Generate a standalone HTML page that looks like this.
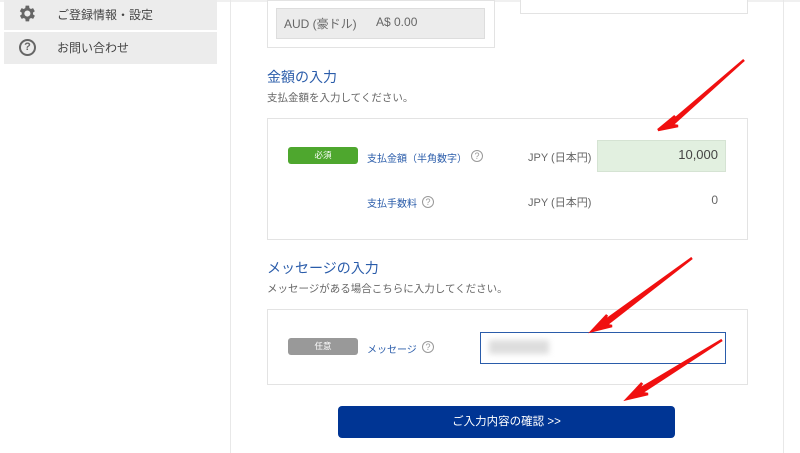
<!DOCTYPE html>
<html><head><meta charset="utf-8"><style>
*{margin:0;padding:0;box-sizing:border-box}
body{width:800px;height:453px;background:#fff;position:relative;overflow:hidden;font-family:"Liberation Sans","Noto Sans CJK JP",sans-serif;color:#555}
.a{position:absolute}
.side{background:#ececec;left:4px;width:213px}
.st{font-size:12px;color:#444}
.q{width:12px;height:12px;border:1px solid #999;border-radius:50%;font-size:9px;color:#999;text-align:center;line-height:10px}
.box{border:1px solid #e3e3e3;background:#fff}
.h{font-size:14px;color:#2a5caa}
.sub{font-size:10.5px;color:#666}
.lbl{font-size:10px;color:#2a5caa}
.badge{border-radius:3px;color:#fff;font-size:8.5px;text-align:center;line-height:17px;width:70px;height:17px}
.cur{font-size:11px;color:#666}
</style></head><body>
<div class="a" style="left:0;top:0;width:800px;height:2px;background:#f0f0f0"></div>
<div class="a side" style="top:0;height:30px"></div>
<div class="a side" style="top:32px;height:32px"></div>
<svg class="a" style="left:16px;top:3px" width="21" height="21" viewBox="0 0 24 24"><path fill="#666" d="M19.4 13a7.5 7.5 0 000-2l2.1-1.6-2-3.5-2.5 1a7.3 7.3 0 00-1.7-1L15 3h-4l-.4 2.9a7.3 7.3 0 00-1.7 1l-2.5-1-2 3.5L6.6 11a7.5 7.5 0 000 2l-2.1 1.6 2 3.5 2.5-1a7.3 7.3 0 001.7 1L11 21h4l.4-2.9a7.3 7.3 0 001.7-1l2.5 1 2-3.5zM13 15.5A3.5 3.5 0 1113 8.5a3.5 3.5 0 010 7z"/></svg>
<div class="a st" style="left:57px;top:6px">ご登録情報・設定</div>
<div class="a" style="left:19px;top:39px;width:17px;height:17px;border:2px solid #666;border-radius:50%;font-size:11px;font-weight:bold;color:#666;text-align:center;line-height:13px">?</div>
<div class="a st" style="left:57px;top:39px">お問い合わせ</div>
<div class="a" style="left:230px;top:0;width:1px;height:453px;background:#e8e8e8"></div>
<div class="a" style="left:783px;top:0;width:1px;height:453px;background:#e8e8e8"></div>
<div class="a box" style="left:267px;top:0;width:228px;height:48px"></div>
<div class="a" style="left:276px;top:8px;width:209px;height:31px;background:#ececec;border:1px solid #ddd"></div>
<div class="a" style="left:284px;top:15px;font-size:12px;color:#666">AUD (豪ドル)</div>
<div class="a" style="left:376px;top:15px;font-size:12px;color:#666">A$ 0.00</div>
<div class="a box" style="left:520px;top:0;width:228px;height:14px;border-top:none"></div>
<div class="a h" style="left:267px;top:67px">金額の入力</div>
<div class="a sub" style="left:267px;top:90px">支払金額を入力してください。</div>
<div class="a box" style="left:267px;top:118px;width:481px;height:122px"></div>
<div class="a badge" style="left:288px;top:147px;background:#4ea72e">必須</div>
<div class="a lbl" style="left:367px;top:150px">支払金額（半角数字）</div>
<div class="a q" style="left:471px;top:150px">?</div>
<div class="a cur" style="left:528px;top:149px">JPY (日本円)</div>
<div class="a" style="left:597px;top:140px;width:129px;height:32px;background:#e2f0e0;border:1px solid #d5e3d3"></div>
<div class="a" style="left:600px;top:147px;width:118px;text-align:right;font-size:13px;color:#444">10,000</div>
<div class="a lbl" style="left:367px;top:195px">支払手数料</div>
<div class="a q" style="left:422px;top:196px">?</div>
<div class="a cur" style="left:528px;top:194px">JPY (日本円)</div>
<div class="a" style="left:700px;top:193px;width:18px;text-align:right;font-size:12px;color:#666">0</div>
<div class="a h" style="left:267px;top:258px">メッセージの入力</div>
<div class="a sub" style="left:267px;top:281px">メッセージがある場合こちらに入力してください。</div>
<div class="a box" style="left:267px;top:309px;width:481px;height:76px"></div>
<div class="a badge" style="left:288px;top:338px;background:#999">任意</div>
<div class="a lbl" style="left:367px;top:341px">メッセージ</div>
<div class="a q" style="left:422px;top:341px">?</div>
<div class="a" style="left:480px;top:332px;width:246px;height:32px;border:1px solid #2a5caa;background:#fff"></div>
<div class="a" style="left:489px;top:340px;width:60px;height:14px;background:#ddd;filter:blur(3px)"></div>
<div class="a" style="left:338px;top:406px;width:337px;height:32px;background:#003594;border-radius:4px;color:#fff;font-size:11.5px;text-align:center;line-height:32px">ご入力内容の確認 &gt;&gt;</div>
<svg class="a" style="left:0;top:0" width="800" height="453">
<g fill="#f01010">
<path d="M744 60 L670 123 L675 116 L658 130 L678 126 L672 125 Z" stroke="#f01010" stroke-width="2.5"/>
<path d="M692 258 L603 322 L607 315 L592 331 L612 326 L606 325 Z" stroke="#f01010" stroke-width="2.5"/>
<path d="M722 340 L638 390 L642 383 L627 399 L648 394 L641 393 Z" stroke="#f01010" stroke-width="2.5"/>
</g></svg>
</body></html>
